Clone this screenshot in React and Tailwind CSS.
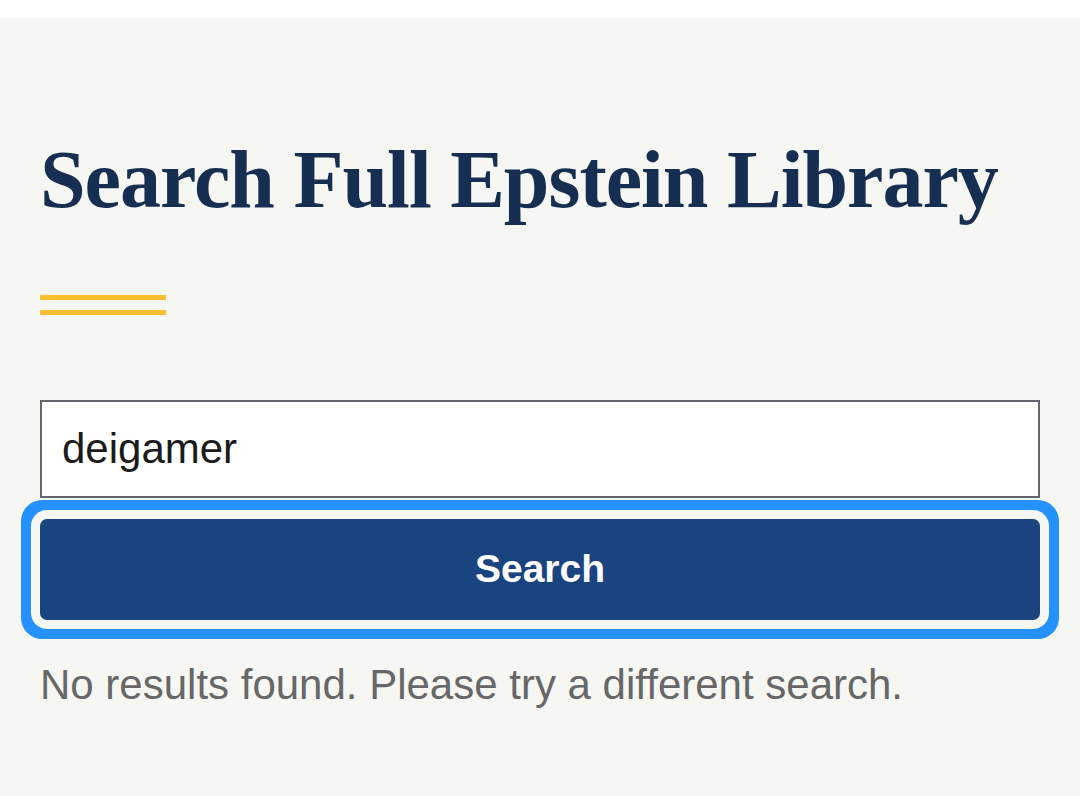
export default function App() {
  return (
    <div className="min-h-[796px] bg-white pt-[18px]">
      <main className="min-h-[778px] bg-[#f6f6f2] px-[40px] pt-[121px]">
        <h1 className="font-['Liberation_Serif',serif] text-[82px] leading-[82px] font-bold tracking-[-1px] text-[#162e51]">
          Search Full Epstein Library
        </h1>

        {/* double accent rule under the title */}
        <div className="mt-[74px] flex w-[126px] flex-col gap-[10px]">
          <div className="h-[5px] bg-[#ffbe2e]" />
          <div className="h-[5px] bg-[#ffbe2e]" />
        </div>

        <form className="mt-[85px] flex flex-col" onSubmit={(e) => e.preventDefault()}>
          <input
            type="search"
            defaultValue="deigamer"
            aria-label="Search terms"
            className="h-[98px] w-full border-2 border-[#62666c] bg-white pl-[20px] font-['Liberation_Sans',sans-serif] text-[42px] text-[#1b1b1b] outline-none"
          />
          <button
            type="submit"
            className="mt-[21px] h-[101px] w-full rounded-[7px] bg-[#1a4480] font-['Liberation_Sans',sans-serif] text-[39px] font-bold text-white ring-[10px] ring-[#2491ff] ring-offset-[9px] ring-offset-[#f6f6f2]"
          >
            Search
          </button>
        </form>

        <p className="mt-[33px] font-['Liberation_Sans',sans-serif] text-[42px] leading-normal text-[#676767]">
          No results found. Please try a different search.
        </p>
      </main>
    </div>
  );
}
